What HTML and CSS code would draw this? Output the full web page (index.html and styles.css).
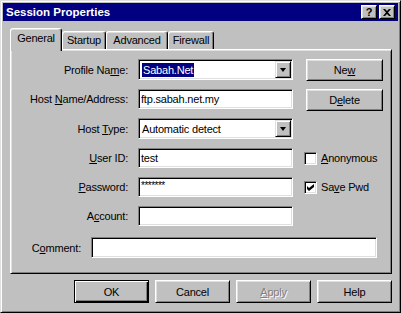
FILE: index.html
```html
<!DOCTYPE html>
<html lang="en">
<head>
    <meta charset="UTF-8">
    <meta name="viewport" content="width=device-width, initial-scale=1.0">
    <title>Session Properties</title>
    <link rel="stylesheet" href="styles.css">
</head>
<body>

<div class="window">
    <div class="caption">
        <span class="caption-title">Session Properties</span>
        <div class="caption-buttons">
            <div class="caption-btn">?</div>
            <div class="caption-btn">
                <svg width="8" height="7" viewBox="0 0 8 7">
                    <path d="M0 0h2l2 2 2-2h2L5 3.5 8 7H6L4 5 2 7H0l3-3.5z" fill="#000"/>
                </svg>
            </div>
        </div>
    </div>

    <div class="dialog">
        <div class="tabs">
            <div class="tab tab-active general">General</div>
            <div class="tab startup">Startup</div>
            <div class="tab advanced">Advanced</div>
            <div class="tab firewall">Firewall</div>
        </div>

        <div class="panel">
            <div class="form">
                <div class="lbl">Profile Na<u>m</u>e:</div>
                <div class="field combo">
                    <span class="combo-text"><span class="sel">Sabah.Net</span></span>
                    <span class="combo-arrow"><span class="tri"></span></span>
                </div>
                <div class="btn side-btn">Ne<u>w</u></div>

                <div class="lbl">Host <u>N</u>ame/Address:</div>
                <div class="field">ftp.sabah.net.my</div>
                <div class="btn side-btn">D<u>e</u>lete</div>

                <div class="lbl">Host <u>T</u>ype:</div>
                <div class="field combo">
                    <span class="combo-text">Automatic detect</span>
                    <span class="combo-arrow"><span class="tri"></span></span>
                </div>
                <div></div>

                <div class="lbl"><u>U</u>ser ID:</div>
                <div class="field">test</div>
                <div class="check">
                    <span class="check-box"></span>
                    <span><u>A</u>nonymous</span>
                </div>

                <div class="lbl"><u>P</u>assword:</div>
                <div class="field pwd">*******</div>
                <div class="check">
                    <span class="check-box">
                        <svg width="7" height="7" viewBox="0 0 7 7">
                            <path d="M0 2l2 2 5-4v3L2 7 0 5z" fill="#000"/>
                        </svg>
                    </span>
                    <span>Sa<u>v</u>e Pwd</span>
                </div>

                <div class="lbl">A<u>c</u>count:</div>
                <div class="field"></div>
                <div></div>

                <div class="comment-row">
                    <div class="lbl comment-lbl">C<u>o</u>mment:</div>
                    <div class="field comment-field"></div>
                </div>
            </div>
        </div>

        <div class="actions">
            <div class="btn btn-default">OK</div>
            <div class="btn">Cancel</div>
            <div class="btn btn-disabled"><u>A</u>pply</div>
            <div class="btn">Help</div>
        </div>
    </div>
</div>

</body>
</html>
```

FILE: styles.css
```css
body {
    margin: 0;
    background-color: #c0c0c0;
    font-family: "Liberation Sans", Arial, sans-serif;
    font-size: 11px;
    letter-spacing: -0.2px;
    color: #000;
}
u {
    text-underline-offset: 1px;
}
.window {
    box-sizing: border-box;
    width: 401px;
    height: 313px;
    padding: 2px;
    background-color: #c0c0c0;
    border: 1px solid;
    border-color: #dfdfdf #000 #000 #dfdfdf;
    box-shadow: inset 1px 1px #fff, inset -1px -1px #808080;
    display: flex;
    flex-direction: column;
}

/* title bar */
.caption {
    height: 18px;
    background-color: #000080;
    display: flex;
    align-items: center;
    padding: 0 3px 0 3px;
}
.caption-title {
    color: #fff;
    font-weight: bold;
    font-size: 11.5px;
    letter-spacing: 0;
}
.caption-buttons {
    margin-left: auto;
    display: flex;
    gap: 2px;
}
.caption-btn {
    box-sizing: border-box;
    width: 16px;
    height: 14px;
    background-color: #c0c0c0;
    border: 1px solid;
    border-color: #fff #000 #000 #fff;
    box-shadow: inset 1px 1px #dfdfdf, inset -1px -1px #808080;
    display: flex;
    align-items: center;
    justify-content: center;
    font-weight: bold;
    font-size: 11px;
    line-height: 1;
}

/* body of dialog */
.dialog {
    flex: 1;
    padding: 7px 6px 0 7px;
    display: flex;
    flex-direction: column;
}
.tabs {
    height: 21px;
    display: flex;
    align-items: flex-end;
    position: relative;
    z-index: 1;
}
.tab {
    box-sizing: border-box;
    height: 18px;
    background-color: #c0c0c0;
    border: 1px solid;
    border-bottom: none;
    border-color: #fff #000 transparent #fff;
    border-radius: 3px 3px 0 0;
    box-shadow: inset -1px 0 #808080, inset 0 1px #dfdfdf;
    text-align: center;
    padding-top: 2px;
}
.tab-active {
    height: 23px;
    margin-bottom: -2px;
    padding-top: 3px;
}
.general { width: 52px; }
.startup { width: 44px; }
.advanced { width: 62px; }
.firewall { width: 46px; }

.panel {
    box-sizing: border-box;
    height: 225px;
    border: 1px solid;
    border-color: #fff #000 #000 #fff;
    box-shadow: inset 1px 1px #dfdfdf, inset -1px -1px #808080;
    padding: 9px 0 0 2px;
}
.form {
    display: grid;
    grid-template-columns: 115px 155px 80px;
    grid-template-rows: 21px 20px 21px 20px 20px 20px 21px;
    column-gap: 10px;
    row-gap: 9px;
}
.lbl {
    text-align: right;
    align-self: center;
    white-space: nowrap;
}

/* sunken inputs */
.field {
    box-sizing: border-box;
    height: 100%;
    background-color: #fff;
    border: 1px solid;
    border-color: #808080 #fff #fff #808080;
    box-shadow: inset 1px 1px #000, inset -1px -1px #dfdfdf;
    padding: 0 2px;
    display: flex;
    align-items: center;
    white-space: nowrap;
}
.pwd {
    align-items: flex-start;
    padding-top: 2px;
    font-size: 10px;
    letter-spacing: -0.5px;
}
.combo {
    padding: 1px;
}
.combo-text {
    flex: 1;
    padding-left: 2px;
}
.sel {
    background-color: #000080;
    color: #fff;
    padding: 1px 1px;
}
.combo-arrow {
    box-sizing: border-box;
    width: 16px;
    height: 17px;
    background-color: #c0c0c0;
    border: 1px solid;
    border-color: #dfdfdf #000 #000 #dfdfdf;
    box-shadow: inset 1px 1px #fff, inset -1px -1px #808080;
    display: flex;
    align-items: center;
    justify-content: center;
}
.tri {
    width: 0;
    height: 0;
    border-left: 3.5px solid transparent;
    border-right: 3.5px solid transparent;
    border-top: 4px solid #000;
}

/* raised buttons */
.btn {
    box-sizing: border-box;
    width: 75px;
    height: 23px;
    background-color: #c0c0c0;
    border: 1px solid;
    border-color: #fff #000 #000 #fff;
    box-shadow: inset 1px 1px #dfdfdf, inset -1px -1px #808080;
    display: flex;
    align-items: center;
    justify-content: center;
}
.side-btn {
    width: 77px;
    height: 22px;
    margin-left: 3px;
}
.btn-default {
    border-color: #000;
    box-shadow: inset 1px 1px #fff, inset -1px -1px #000, inset -2px -2px #808080;
}
.btn-disabled {
    color: #808080;
    text-shadow: 1px 1px #fff;
}

/* checkboxes */
.check {
    display: flex;
    align-items: center;
    gap: 4px;
    margin-left: 1px;
}
.check-box {
    box-sizing: border-box;
    width: 13px;
    height: 13px;
    background-color: #fff;
    border: 1px solid;
    border-color: #808080 #fff #fff #808080;
    box-shadow: inset 1px 1px #000, inset -1px -1px #dfdfdf;
    display: flex;
    align-items: center;
    justify-content: center;
}

.comment-row {
    grid-column: 1 / -1;
    display: flex;
    align-items: center;
    gap: 10px;
    margin-top: 4px;
}
.comment-lbl {
    width: 68px;
}
.comment-field {
    width: 286px;
    height: 21px;
}

.actions {
    display: flex;
    justify-content: flex-end;
    gap: 6px;
    margin-top: 6px;
}
```
